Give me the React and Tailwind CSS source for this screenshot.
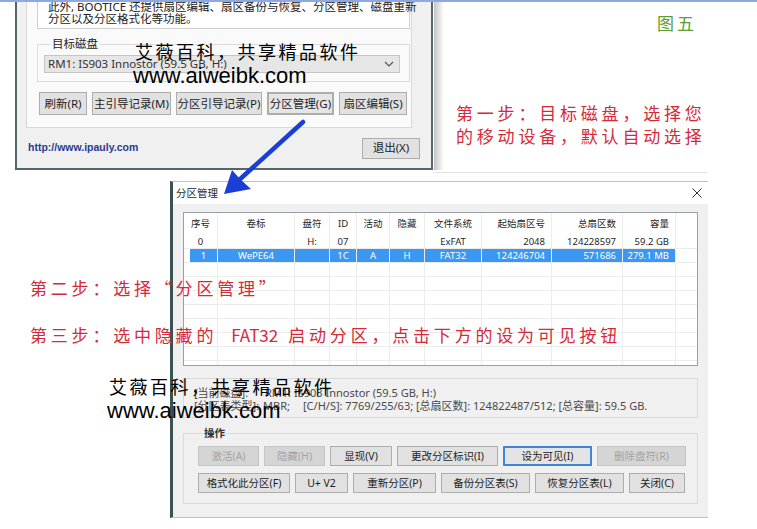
import React from 'react';

const UI = "font-['Noto_Sans','Noto_Sans_CJK_SC',sans-serif]";

// 分区列表的列定义
const COLS = [
  { w: 'w-[34px]', label: '序号', align: 'justify-center' },
  { w: 'w-[77px]', label: '卷标', align: 'justify-center' },
  { w: 'w-[35px]', label: '盘符', align: 'justify-center' },
  { w: 'w-[27px]', label: 'ID', align: 'justify-center' },
  { w: 'w-[33px]', label: '活动', align: 'justify-center' },
  { w: 'w-[35px]', label: '隐藏', align: 'justify-center' },
  { w: 'w-[57px]', label: '文件系统', align: 'justify-center' },
  { w: 'w-[70px]', label: '起始扇区号', align: 'justify-end pr-[6px]' },
  { w: 'w-[71px]', label: '总扇区数', align: 'justify-end pr-[6px]' },
  { w: 'w-[53px]', label: '容量', align: 'justify-end pr-[6px]' },
];

const PARTS = [
  { cells: ['0', '', 'H:', '07', '', '', 'ExFAT', '2048', '124228597', '59.2 GB'] },
  { cells: ['1', 'WePE64', '', '1C', 'A', 'H', 'FAT32', '124246704', '571686', '279.1 MB'], selected: true },
];

const WinBtn = ({ className = '', children }) => (
  <div
    className={`flex h-[23px] shrink-0 items-center justify-center border border-[#adadad] bg-[#e1e1e1] text-[11.5px] leading-none text-[#1e1e1e] ${className}`}
  >
    {children}
  </div>
);

const DlgBtn = ({ className = '', disabled, focused, children }) => (
  <div
    className={`flex h-[20px] shrink-0 items-center justify-center text-[10.5px] leading-none ${
      disabled
        ? 'border border-[#c4c4c4] bg-[#d5d5d5] text-[#a3a3a3]'
        : focused
          ? 'border-2 border-[#3f86d6] bg-[#e4e4e4] text-[#1e1e1e]'
          : 'border border-[#adadad] bg-[#e1e1e1] text-[#1e1e1e]'
    } ${className}`}
  >
    {children}
  </div>
);

const ListRow = ({ cells, selected, header }) => (
  <div className={`flex shrink-0 ${header ? 'h-[22px]' : 'h-[14px] border-b border-[#ececec]'}`}>
    {COLS.map((c, i) => {
      const text = header ? c.label : cells ? cells[i] : '';
      if (selected && i === 0) {
        return (
          <div key={i} className={`${c.w} flex shrink-0 border-r border-[#ececec]`}>
            <div className="w-[6px]" />
            <div className="flex flex-1 items-center justify-center bg-[#3b97f2] text-white">{text}</div>
          </div>
        );
      }
      return (
        <div
          key={i}
          className={`${c.w} flex shrink-0 items-center border-r border-[#ececec] ${c.align} ${
            selected ? 'bg-[#3b97f2] text-white' : ''
          }`}
        >
          {text}
        </div>
      );
    })}
    <div className="flex-1" />
  </div>
);

const TopWindow = () => (
  <div className="absolute left-[15px] top-[-42px] flex h-[212px] w-[418px] flex-col border-x-2 border-b-2 border-[#56656a] bg-[#f0f0f0] text-[#222]">
    <div className="ml-[9px] flex h-[170px] w-[386px] flex-col border border-t-0 border-[#d9d9d9] bg-[#fafafa] pl-[10px] pr-[1px]">
      <div className="flex h-[71px] w-[373px] flex-col justify-end border border-t-0 border-[#cfcfcf] bg-white pb-[3px] pl-[10px] text-[11.5px] leading-[12px]">
        <div className="whitespace-nowrap">此外, BOOTICE 还提供扇区编辑、扇区备份与恢复、分区管理、磁盘重新</div>
        <div className="whitespace-nowrap">分区以及分区格式化等功能。</div>
      </div>

      <fieldset className="mt-[9px] w-[373px] border border-[#dcdcdc] pb-[8px] pl-[6px] pt-[5px]">
        <legend className="ml-[6px] px-[2px] text-[11.5px] leading-[12px]">目标磁盘</legend>
        <div className="flex h-[18px] w-[356px] items-center justify-between border border-[#c6c6c6] bg-[#e6e6e6] pl-[3px] pr-[5px] text-[11.5px] leading-none text-[#333]">
          <span>RM1: IS903 Innostor (59.5 GB, H:)</span>
          <svg width="10" height="6" viewBox="0 0 10 6" fill="none" stroke="#555" strokeWidth="1.2">
            <path d="M1 1l4 4 4-4" />
          </svg>
        </div>
      </fieldset>

      <div className="ml-[2px] mt-[10px] flex gap-[5px]">
        <WinBtn className="w-[48px]">刷新(R)</WinBtn>
        <WinBtn className="w-[79px]">主引导记录(M)</WinBtn>
        <WinBtn className="w-[86px]">分区引导记录(P)</WinBtn>
        <WinBtn className="w-[67px] border-2 border-[#4a8ad4] bg-[#e5e5e5]">分区管理(G)</WinBtn>
        <WinBtn className="w-[68px]">扇区编辑(S)</WinBtn>
      </div>
    </div>

    <div className="flex flex-1 items-center justify-between pl-[11px] pr-[11px]">
      <span className="font-['Liberation_Sans',sans-serif] text-[10.5px] font-bold text-[#2b3a8c]">http://www.ipauly.com</span>
      <div className="flex h-[21px] w-[58px] items-center justify-center border border-[#adadad] bg-[#e1e1e1] text-[11.5px] leading-none">
        退出(X)
      </div>
    </div>
  </div>
);

const PartitionDialog = () => (
  <div className="absolute left-[170px] top-[181px] flex h-[337px] w-[538px] flex-col border-y border-l-[3px] border-y-[#a9c7e2] border-l-[#3a5252] bg-[#f0f0f0] text-[#1e1e1e]">
    <div className="flex h-[22px] shrink-0 items-center justify-between bg-white pl-[3px] pr-[6px]">
      <span className="text-[10.5px] leading-none">分区管理</span>
      <svg width="10" height="10" viewBox="0 0 10 10" stroke="#333" strokeWidth="1">
        <path d="M0.5 0.5l9 9M9.5 0.5l-9 9" />
      </svg>
    </div>

    <div className="flex flex-1 flex-col px-[10px] pt-[8px]">
      <div className="flex h-[154px] flex-col overflow-hidden border border-[#9a9ea6] bg-white text-[9.5px] leading-none">
        <ListRow header />
        {PARTS.map((p, i) => (
          <ListRow key={i} cells={p.cells} selected={p.selected} />
        ))}
        {Array.from({ length: 9 }).map((_, i) => (
          <ListRow key={`e${i}`} />
        ))}
      </div>

      <div className="mt-[12px] h-[40px] border border-[#dadada] pl-[10px] pt-[7px] text-[11px] leading-[13px] text-[#4a4a4a]">
        <div className="flex whitespace-nowrap">
          <span className="w-[71px]">[当前磁盘]:</span>
          <span>RM1: IS903 Innostor (59.5 GB, H:)</span>
        </div>
        <div className="flex whitespace-nowrap">
          <span className="w-[69px]">[分区表类型]:</span>
          <span className="w-[40px]">MBR;</span>
          <span>[C/H/S]: 7769/255/63; [总扇区数]: 124822487/512; [总容量]: 59.5 GB.</span>
        </div>
      </div>

      <fieldset className="mt-[9px] border border-[#dadada] pb-[10px] pl-[14px] pt-[7px]">
        <legend className="ml-[5px] px-[1px] text-[10.5px] font-bold leading-[12px] text-[#333]">操作</legend>
        <div className="flex gap-[5px]">
          <DlgBtn disabled className="w-[61px]">激活(A)</DlgBtn>
          <DlgBtn disabled className="w-[61px]">隐藏(H)</DlgBtn>
          <DlgBtn className="w-[62px]">显现(V)</DlgBtn>
          <DlgBtn className="w-[101px]">更改分区标识(I)</DlgBtn>
          <DlgBtn focused className="w-[89px]">设为可见(I)</DlgBtn>
          <DlgBtn disabled className="w-[89px]">删除盘符(R)</DlgBtn>
        </div>
        <div className="mt-[7px] flex gap-[5px]">
          <DlgBtn className="w-[92px]">格式化此分区(F)</DlgBtn>
          <DlgBtn className="w-[53px]">U+ V2</DlgBtn>
          <DlgBtn className="w-[83px]">重新分区(P)</DlgBtn>
          <DlgBtn className="w-[89px]">备份分区表(S)</DlgBtn>
          <DlgBtn className="w-[89px]">恢复分区表(L)</DlgBtn>
          <DlgBtn className="w-[56px]">关闭(C)</DlgBtn>
        </div>
      </fieldset>
    </div>
  </div>
);

const Watermark = ({ className }) => (
  <div className={`pointer-events-none absolute ${className}`}>
    <p className="ml-[2px] whitespace-nowrap font-['Noto_Sans_CJK_SC',sans-serif] text-[18px] leading-[24px] tracking-[2.5px] text-black">
      艾薇百科，共享精品软件
    </p>
    <p className="mt-[1px] whitespace-nowrap font-['Liberation_Sans',sans-serif] text-[22px] leading-[24px] text-black">
      www.aiweibk.com
    </p>
  </div>
);

export default function App() {
  return (
    <div className={`relative h-[529px] w-[757px] overflow-hidden bg-white ${UI}`}>
      <TopWindow />
      {/* 窗口阴影与分隔线 */}
      <div className="absolute left-[434px] top-0 h-[170px] w-[10px] bg-gradient-to-r from-[#c4c4c4] to-white" />
      <div className="absolute left-[433px] top-[172px] h-px w-[274px] bg-[#e3e3e3]" />
      <div className="absolute left-0 top-0 h-[2px] w-full bg-[#8ea8e4]" />

      <PartitionDialog />

      <p className="absolute left-[657px] top-[11px] font-['Noto_Sans_CJK_SC',sans-serif] text-[17px] leading-[23px] tracking-[3px] text-[#5aa032]">
        图五
      </p>

      <div className="absolute left-[456px] top-[101px] font-['Noto_Sans_CJK_SC',sans-serif] text-[17px] leading-[23px] tracking-[3.8px] text-[#d42a3a]">
        <p>第一步：目标磁盘，选择您</p>
        <p>的移动设备，默认自动选择</p>
      </div>

      <div className="absolute left-[30px] top-[276px] whitespace-nowrap font-['Noto_Sans_CJK_SC',sans-serif] text-[17px] leading-[23px] tracking-[3.8px] text-[#d42a3a]">
        <p>第二步：选择“分区管理”</p>
        <p className="mt-[24px]">
          第三步：选中隐藏的<span className="ml-[14px] mr-[10px] tracking-normal">FAT32</span>启动分区，点击下方的设为可见按钮
        </p>
      </div>

      <Watermark className="left-[133px] top-[39px]" />
      <Watermark className="left-[107px] top-[374px]" />

      <svg className="pointer-events-none absolute left-0 top-0" width="757" height="529" viewBox="0 0 757 529">
        <path d="M303 122L238 181" stroke="#1a3fd6" strokeWidth="4.5" strokeLinecap="round" />
        <path d="M224 194L232 170L240 179L251 189Z" fill="#1a3fd6" />
      </svg>
    </div>
  );
}
